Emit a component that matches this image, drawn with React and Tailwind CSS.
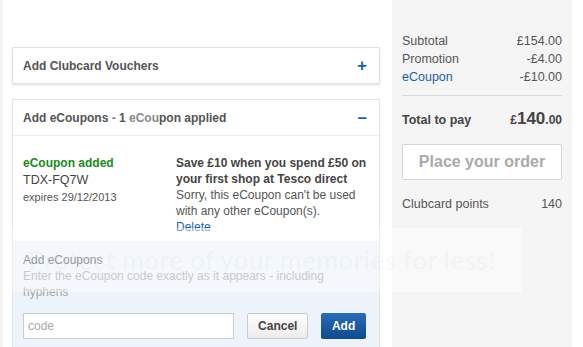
// App.jsx — Tesco checkout: voucher / eCoupon panels with order summary.

const FONT = { fontFamily: '"Liberation Sans", Arial, sans-serif' };

// Collapsible card header with a blue + / – toggle
function PanelHeader({ title, open, children }) {
  return (
    <div className="flex items-center justify-between h-[35px] pl-[10px] pr-[12px]">
      <p className="text-[12px] font-bold text-[#555]">{children ?? title}</p>
      <span className="text-[#1d5fa8] text-[17px] font-bold leading-none">{open ? '–' : '+'}</span>
    </div>
  );
}

function SummaryRow({ label, value, blue }) {
  return (
    <div className="flex justify-between h-[18px] items-center text-[12.5px]">
      <span className={blue ? 'text-[#1d5fa8]' : 'text-[#555]'}>{label}</span>
      <span className="text-[#555]">{value}</span>
    </div>
  );
}

export default function App() {
  return (
    <div className="relative w-[583px] h-[347px] overflow-hidden bg-white flex" style={FONT}>

      {/* ── Left column ── */}
      <div className="w-[388px] h-full border-l-[3px] border-[#f3f3f3] pl-[9px] pr-[8px] pt-[47px]">

        {/* Clubcard vouchers (collapsed) */}
        <div className="border border-[#e3e3e3] bg-white shadow-[0_1px_2px_rgba(0,0,0,0.15)]">
          <PanelHeader title="Add Clubcard Vouchers" />
        </div>

        {/* eCoupons (open) */}
        <div className="mt-[15px] border border-[#e3e3e3] bg-white">
          <PanelHeader open>
            Add eCoupons <span className="text-[#777]">-</span> 1 <span className="text-[#888]">eCou</span>pon applied
          </PanelHeader>
          <div className="border-t border-[#ececec] flex pl-[10px] pt-[19px] pb-[6px]">
            <div className="w-[153px]">
              <p className="text-[12px] font-bold text-[#1a8a1a] leading-[17px]">eCoupon added</p>
              <p className="text-[12.5px] text-[#444] leading-[17px]">TDX-FQ7W</p>
              <p className="text-[11px] text-[#555] leading-[16px]">expires 29/12/2013</p>
            </div>
            <div className="text-[12px] leading-[16px] text-[#555]">
              <p className="font-bold text-[#444]">Save £10 when you spend £50 on</p>
              <p className="font-bold text-[#444]">your first shop at Tesco direct</p>
              <p>Sorry, this eCoupon can't be used</p>
              <p>with any other eCoupon(s).</p>
              <p className="text-[#1d5fa8]">Delete</p>
            </div>
          </div>

          {/* Add another code */}
          <div className="bg-[#edf3fa] pl-[10px] pr-[13px] pt-[11px] h-[120px]">
            <p className="text-[12px] text-[#555] leading-[16px]">Add eCoupons</p>
            <p className="text-[12px] text-[#a5a5a5] leading-[16px] w-[340px]">
              Enter the eCoupon code exactly as it appears - including hyphens
            </p>
            <div className="flex items-center mt-[13px]">
              <input
                placeholder="code"
                className="w-[212px] h-[26px] border border-[#ccc] bg-white px-[4px] text-[12px] text-[#444] placeholder:text-[#aaa] outline-none"
                style={FONT}
              />
              <button className="ml-[13px] w-[61px] h-[26px] border border-[#ccc] bg-gradient-to-b from-white to-[#ececec] rounded-[2px] text-[12px] font-bold text-[#444]">
                Cancel
              </button>
              <button className="ml-[13px] w-[45px] h-[26px] rounded-[2px] bg-gradient-to-b from-[#2a6cb6] to-[#0d4a8e] text-[12px] font-bold text-white">
                Add
              </button>
            </div>
          </div>
        </div>
      </div>

      {/* ── Order summary ── */}
      <div className="ml-[4px] w-[180px] h-full bg-[#f5f5f5] px-[10px] pt-[32px]">
        <SummaryRow label="Subtotal" value="£154.00" />
        <SummaryRow label="Promotion" value="-£4.00" />
        <SummaryRow label="eCoupon" value="-£10.00" blue />
        <div className="border-t border-[#d8d8d8] mt-[9px]" />
        <div className="flex justify-between items-baseline mt-[10px]">
          <span className="text-[12.5px] font-bold text-[#444]">Total to pay</span>
          <span className="text-[#444] font-bold">
            <span className="text-[12px]">£</span>
            <span className="text-[17px]">140</span>
            <span className="text-[12px]">.00</span>
          </span>
        </div>
        <button className="mt-[12px] w-full h-[36px] border border-[#d5d5d5] bg-white rounded-[2px] text-[16px] font-bold text-[#aaa]">
          Place your order
        </button>
        <div className="flex justify-between mt-[15px] text-[12.5px] text-[#555]">
          <span>Clubcard points</span>
          <span>140</span>
        </div>
      </div>

      {/* Photo-host watermark laid over the page */}
      <div
        className="absolute left-[10px] top-[228px] w-[512px] h-[64px] bg-white/40 flex items-center pl-[18px] text-[26px] font-bold tracking-[0.3px] text-[#1d4a80]/[0.035] pointer-events-none whitespace-nowrap"
        style={{ fontFamily: 'Lato, sans-serif' }}
      >
        Protect more of your memories for less!
      </div>
    </div>
  );
}
